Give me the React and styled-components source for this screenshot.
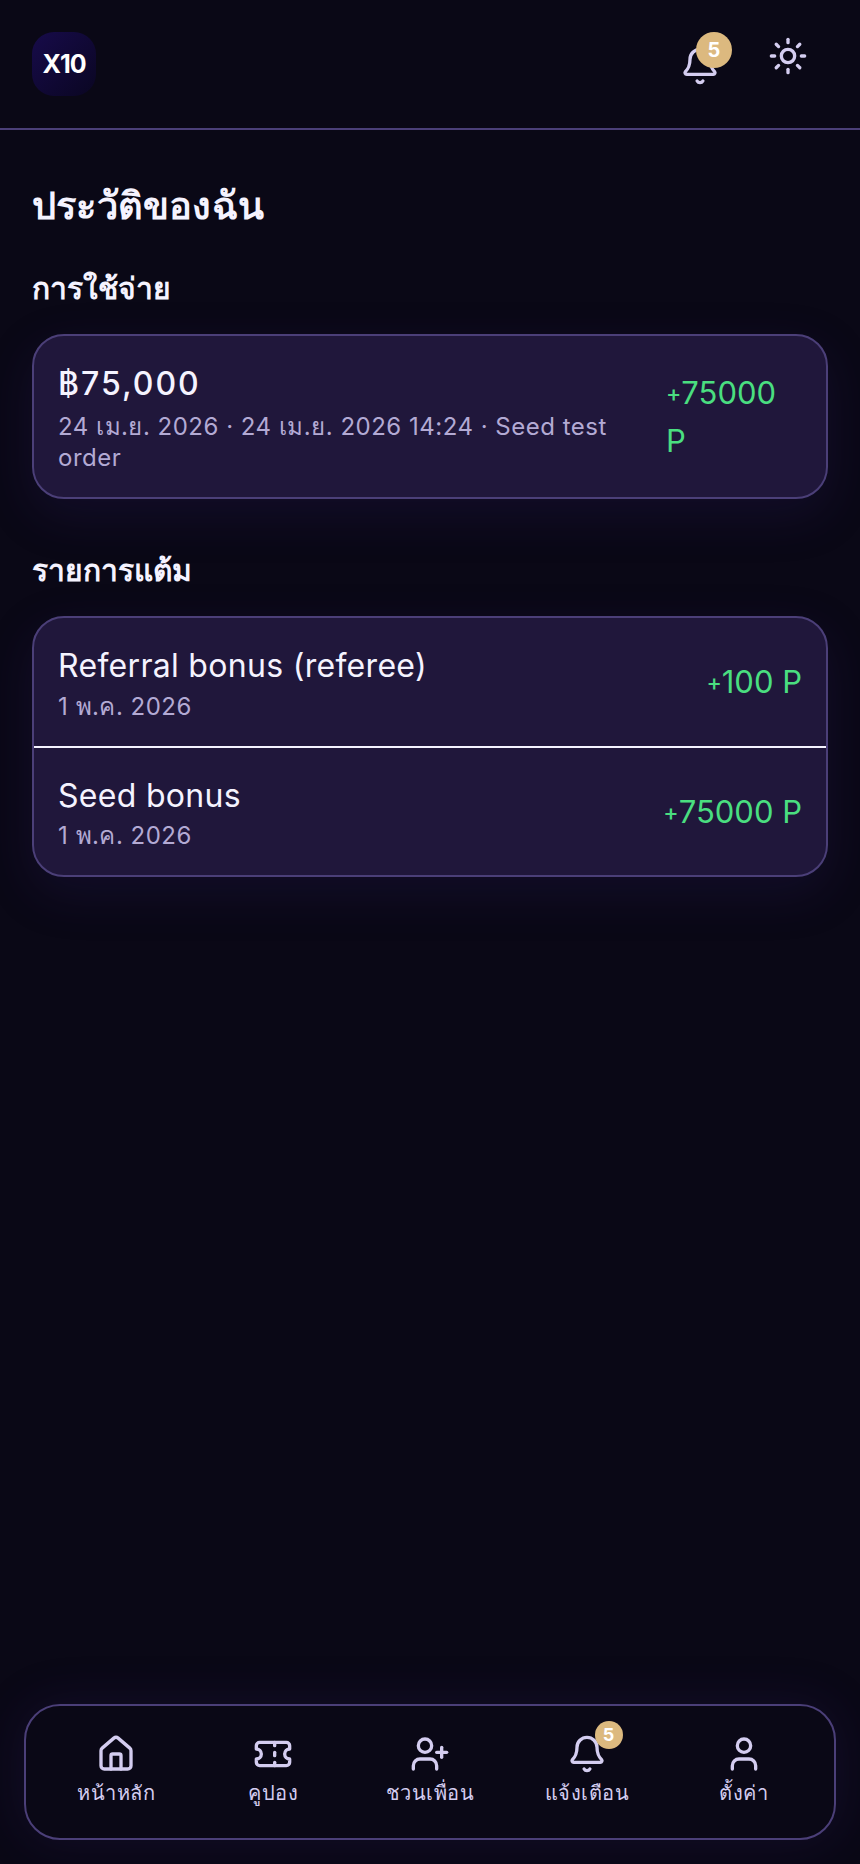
import React from 'react';
import styled, { createGlobalStyle } from 'styled-components';
import { Bell, House, Sun, Ticket, User, UserPlus } from 'lucide-react';

const GlobalStyle = createGlobalStyle`
  html, body {
    margin: 0;
    padding: 0;
    background: #0a0816;
  }
  * {
    box-sizing: border-box;
  }
`;

const FONT = `Inter, "Noto Sans", "DejaVu Sans", sans-serif`;

const Page = styled.div`
  display: flex;
  flex-direction: column;
  height: 1864px;
  background: #0a0816;
  color: #f5f3ff;
  font-family: ${FONT};
  overflow: hidden;
`;

const Header = styled.header`
  display: flex;
  justify-content: space-between;
  align-items: flex-start;
  height: 130px;
  padding: 32px 32px 0;
  border-bottom: 2px solid #4b3f78;
`;

const Logo = styled.div`
  display: flex;
  align-items: center;
  justify-content: center;
  width: 64px;
  height: 64px;
  border-radius: 22px;
  background: linear-gradient(135deg, #170b4a, #0a0622);
  color: #fff;
  font-size: 25px;
  font-weight: 700;
  letter-spacing: -1px;
`;

const HeaderActions = styled.div`
  display: flex;
  align-items: flex-start;
  gap: 48px;
  margin: 4px 20px 0 0;
`;

const IconWrap = styled.span`
  position: relative;
  display: flex;
  margin-top: ${({ $drop }) => $drop || '0'};
  color: #d4cdf0;
`;

const Badge = styled.span`
  position: absolute;
  display: flex;
  align-items: center;
  justify-content: center;
  top: ${({ $small }) => ($small ? '-13px' : '-14px')};
  left: ${({ $small }) => ($small ? '28px' : '16px')};
  width: ${({ $small }) => ($small ? '28px' : '36px')};
  height: ${({ $small }) => ($small ? '28px' : '36px')};
  border-radius: 50%;
  background: #dcb97f;
  color: #fff;
  font-size: ${({ $small }) => ($small ? '18px' : '20px')};
  font-weight: 700;
`;

const Main = styled.main`
  flex: 1;
  padding: 48px 32px 0;
`;

const Title = styled.h1`
  margin: 0 0 34px;
  font-size: 38px;
  line-height: 54px;
  font-weight: 600;
  letter-spacing: 0.2px;
  color: #f5f3ff;
`;

const SectionTitle = styled.h2`
  margin: 0 0 23px;
  font-size: 30px;
  line-height: 45px;
  font-weight: 600;
  color: #f5f3ff;
`;

const Card = styled.section`
  margin-bottom: ${({ $last }) => ($last ? '0' : '49px')};
  background: #20173b;
  border: 2px solid #4b3f78;
  border-radius: 32px;
  box-shadow: 0 16px 48px rgba(50, 30, 110, 0.22);
  overflow: hidden;
`;

const Row = styled.div`
  display: flex;
  align-items: center;
  justify-content: space-between;
  padding: 24px;
  border-top: ${({ $divided }) => ($divided ? '2px solid #f5f3ff' : 'none')};
`;

const Info = styled.div`
  flex: 1;
  min-width: 0;
`;

const Amount = styled.div`
  font-size: 32px;
  line-height: 48px;
  font-weight: 500;
  letter-spacing: 2px;
  color: #f5f3ff;
`;

const RowName = styled.div`
  font-size: 32px;
  line-height: 48px;
  font-weight: 400;
  letter-spacing: 0.3px;
  color: #f5f3ff;
`;

const Meta = styled.div`
  margin-top: ${({ $gap }) => $gap || '0'};
  font-size: 24px;
  line-height: 31px;
  letter-spacing: 0.5px;
  color: #b3aad4;
`;

const Points = styled.div`
  flex: none;
  width: ${({ $width }) => $width || 'auto'};
  margin-left: 24px;
  font-size: 31px;
  line-height: 48px;
  color: #4ade80;
`;

const Sign = styled.span`
  font-size: 23px;
  font-weight: 500;
  line-height: 1;
  vertical-align: 2px;
`;

const Nav = styled.nav`
  display: grid;
  grid-template-columns: repeat(5, 1fr);
  align-items: center;
  height: 136px;
  margin: 0 24px 24px;
  padding: 0 12px;
  background: #0a0816;
  border: 2px solid #4b3f78;
  border-radius: 36px;
  box-shadow: 0 0 48px rgba(50, 30, 110, 0.22);
`;

const NavItem = styled.div`
  display: flex;
  flex-direction: column;
  align-items: center;
  gap: 4px;
  padding-bottom: 2px;
  font-size: 20px;
  line-height: 30px;
  letter-spacing: 0.5px;
  color: #d4cdf0;
`;

const navItems = [
  { label: 'หน้าหลัก', Icon: House },
  { label: 'คูปอง', Icon: Ticket },
  { label: 'ชวนเพื่อน', Icon: UserPlus },
  { label: 'แจ้งเตือน', Icon: Bell, badge: 5 },
  { label: 'ตั้งค่า', Icon: User },
];

export default function App() {
  return (
    <Page>
      <GlobalStyle />
      <Header>
        <Logo>X10</Logo>
        <HeaderActions>
          <IconWrap $drop="10px">
            <Bell size={40} />
            <Badge>5</Badge>
          </IconWrap>
          <IconWrap>
            <Sun size={40} />
          </IconWrap>
        </HeaderActions>
      </Header>
      <Main>
        <Title>ประวัติของฉัน</Title>
        <SectionTitle>การใช้จ่าย</SectionTitle>
        <Card>
          <Row>
            <Info>
              <Amount>฿75,000</Amount>
              <Meta $gap="3px">24 เม.ย. 2026 · 24 เม.ย. 2026 14:24 · Seed test order</Meta>
            </Info>
            <Points $width="136px">
              <Sign>+</Sign>75000<br />P
            </Points>
          </Row>
        </Card>
        <SectionTitle>รายการแต้ม</SectionTitle>
        <Card $last>
          <Row>
            <Info>
              <RowName>Referral bonus (referee)</RowName>
              <Meta $gap="1px">1 พ.ค. 2026</Meta>
            </Info>
            <Points><Sign>+</Sign>100 P</Points>
          </Row>
          <Row $divided>
            <Info>
              <RowName>Seed bonus</RowName>
              <Meta>1 พ.ค. 2026</Meta>
            </Info>
            <Points><Sign>+</Sign>75000 P</Points>
          </Row>
        </Card>
      </Main>
      <Nav>
        {navItems.map(({ label, Icon, badge }) => (
          <NavItem key={label}>
            <IconWrap>
              <Icon size={40} />
              {badge && <Badge $small>{badge}</Badge>}
            </IconWrap>
            {label}
          </NavItem>
        ))}
      </Nav>
    </Page>
  );
}
